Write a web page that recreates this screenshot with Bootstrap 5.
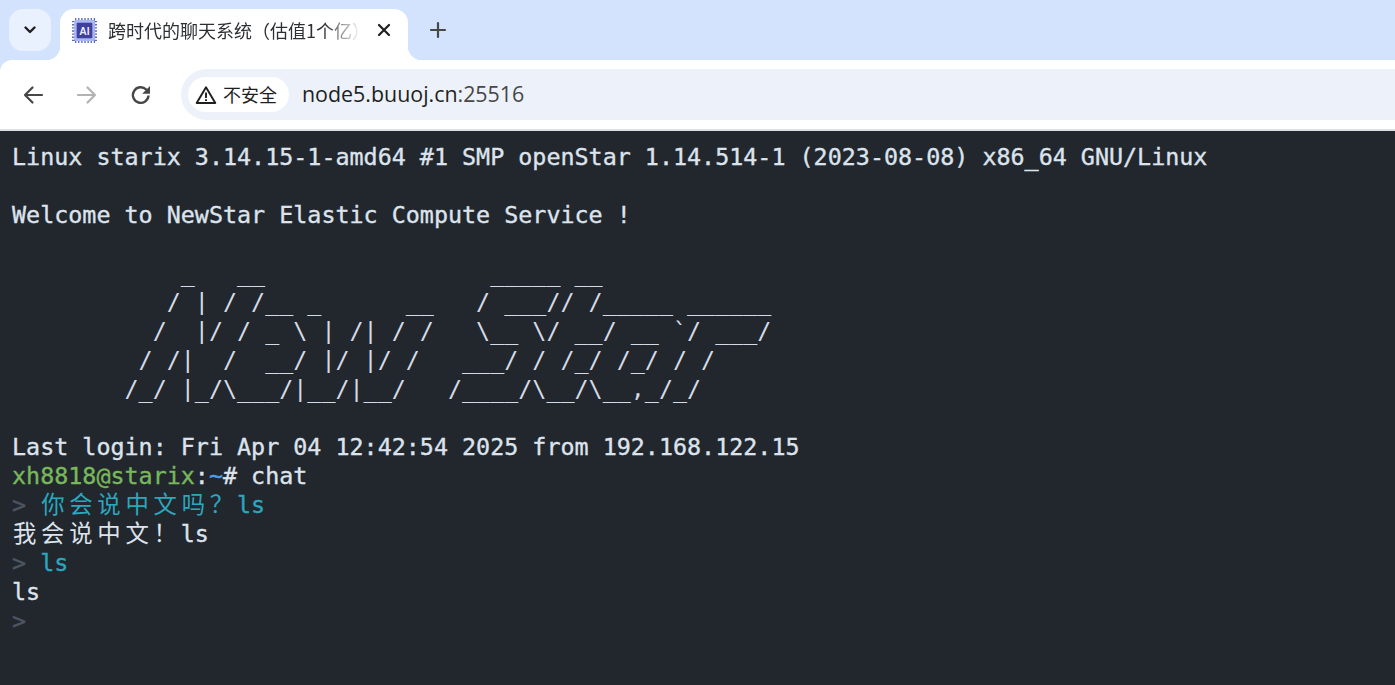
<!DOCTYPE html>
<html lang="zh-CN">
<head>
<meta charset="utf-8">
<title>跨时代的聊天系统（估值1个亿）</title>
<link href="https://cdn.jsdelivr.net/npm/bootstrap@5.3.0/dist/css/bootstrap.min.css" rel="stylesheet">
<style>
html,body{height:100%;overflow:hidden;background:#d3e3fd}
.tab-strip{height:60px;background:#d3e3fd;padding:9px 0 0 9px}
.tab-menu{width:42px;height:42px;border-radius:14px;background:#e9f0fe;border:0;padding:0}
.tab-item{width:348px;height:51px;margin-left:9px;background:#fff;border-radius:14px 14px 0 0;padding:0 13px 9px 12px;position:relative;gap:11px}
.tab-item::before,.tab-item::after{content:"";position:absolute;bottom:0;width:14px;height:14px}
.tab-item::before{left:-14px;background:radial-gradient(circle at 0 0,transparent 14px,#fff 14.5px)}
.tab-item::after{right:-14px;background:radial-gradient(circle at 100% 0,transparent 14px,#fff 14.5px)}
.tab-title{width:256px;overflow:hidden;white-space:nowrap;font:400 18px/24px "Noto Sans CJK SC",sans-serif;color:#2d2f33;-webkit-mask-image:linear-gradient(90deg,#000 84%,transparent 99%);mask-image:linear-gradient(90deg,#000 84%,transparent 99%)}
.tab-new{margin-left:20px;width:20px;height:20px;margin-bottom:9px}
.tool-bar{height:69px;background:#fff;border-radius:12px 0 0 0;padding-left:21px;position:relative;z-index:1}
.nav-icon{width:24px;height:24px;flex:none}
.nav-gap{margin-left:30px}
.addr-box{height:51px;flex:1;margin-left:28px;background:#edf2fa;border-radius:26px 0 0 26px;padding-left:7px}
.addr-chip{height:35px;width:101px;background:#fff;border-radius:18px;padding-left:7px;gap:6px;font:400 18px/35px "Noto Sans CJK SC",sans-serif;color:#1f1f1f;white-space:nowrap}
.addr-url{margin-left:13px;margin-bottom:1px;font:400 21.4px/28px "Open Sans",sans-serif;color:#1f1f1f;white-space:nowrap}
.addr-port{color:#474747}
.bar-edge{height:2px;background:#dcdfe3}
.term-view{background:#22272e;height:554px;padding:12px 12px 0;overflow:hidden;font:400 23.36px/29px "DejaVu Sans Mono",monospace;color:#dde3ec;-webkit-text-stroke:.35px currentColor}
.term-line{height:29px;white-space:pre}
.term-art{-webkit-text-stroke:0;color:#d5dbe5}
.zh-cell{display:inline-block;margin-left:1px;margin-right:-1px;font:400 23.4px/24px "Noto Sans CJK SC",sans-serif;letter-spacing:4.720px;-webkit-text-stroke:0}
.t-green{color:#78b85b}
.t-blue{color:#4f9fe6}
.t-cyan{color:#2ba6bd}
.t-dim{color:#4d5562}
</style>
</head>
<body>
<div class="tab-strip d-flex align-items-start">
  <button class="tab-menu d-flex align-items-center justify-content-center" aria-label="标签页列表">
    <svg width="14" height="10" viewBox="0 0 14 10"><path d="M2.5 2.5 7 7l4.500-4.500" fill="none" stroke="#1f1f1f" stroke-width="2.400" stroke-linecap="round" stroke-linejoin="round"/></svg>
  </button>
  <div class="tab-item d-flex align-items-center">
    <svg width="25" height="25" viewBox="0 0 24 24" class="flex-shrink-0">
      <path d="M3.500 0v24M6.500 0v24M9.500 0v24M12.500 0v24M15.500 0v24M18.500 0v24M21.500 0v24M0 3.500h24M0 6.500h24M0 9.500h24M0 12.500h24M0 15.500h24M0 18.500h24M0 21.500h24" stroke="#5f69c0" stroke-width="1.300"/>
      <rect x="2" y="2" width="20" height="20" rx="1.500" fill="#a9b7f2"/>
      <rect x="4.500" y="4.500" width="15" height="15" rx="1" fill="#3f3f9c"/>
      <text x="12" y="16" text-anchor="middle" font-family="Liberation Sans, sans-serif" font-weight="700" font-size="10" fill="#e8ebff">AI</text>
    </svg>
    <span class="tab-title">跨时代的聊天系统（估值1个亿）</span>
    <svg width="14" height="14" viewBox="0 0 14 14" class="ms-auto me-1"><path d="M2 2l10 10M12 2 2 12" stroke="#1f1f1f" stroke-width="2.200" stroke-linecap="round"/></svg>
  </div>
  <svg class="tab-new align-self-center" viewBox="0 0 20 20"><path d="M10 3v14M3 10h14" stroke="#474747" stroke-width="2.200" stroke-linecap="round"/></svg>
</div>
<div class="tool-bar d-flex align-items-center">
  <svg class="nav-icon" viewBox="0 0 24 24"><path d="M21 12H4M11.500 4.500 4 12l7.500 7.500" fill="none" stroke="#474747" stroke-width="2.200" stroke-linecap="round" stroke-linejoin="round"/></svg>
  <svg class="nav-icon nav-gap" viewBox="0 0 24 24"><path d="M3 12h17M12.500 4.500 20 12l-7.500 7.500" fill="none" stroke="#b2b2b2" stroke-width="2.200" stroke-linecap="round" stroke-linejoin="round"/></svg>
  <svg class="nav-icon nav-gap" viewBox="0 0 24 24"><path d="M19.500 12.500a7.800 7.800 0 1 1-2.300-6l2.300 2.400" fill="none" stroke="#474747" stroke-width="2.400"/><path d="M21 3v7.800h-7.800z" fill="#474747"/></svg>
  <div class="addr-box d-flex align-items-center">
    <div class="addr-chip d-flex align-items-center">
      <svg width="22" height="20" viewBox="0 0 22 20" class="flex-shrink-0"><path d="M11 2.200 20.300 18H1.700z" fill="none" stroke="#1f1f1f" stroke-width="1.900" stroke-linejoin="round"/><path d="M11 7.500v5.500M11 14.300v1.800" stroke="#1f1f1f" stroke-width="1.900"/></svg>
      <span>不安全</span>
    </div>
    <div class="addr-url">node5.buuoj.cn<span class="addr-port">:25516</span></div>
  </div>
</div>
<div class="bar-edge"></div>
<main class="term-view">
<div class="term-line">Linux starix 3.14.15-1-amd64 #1 SMP openStar 1.14.514-1 (2023-08-08) x86_64 GNU/Linux</div>
<div class="term-line"></div>
<div class="term-line">Welcome to NewStar Elastic Compute Service !</div>
<div class="term-line"></div>
<div class="term-line term-art">            _   __                _____ __</div>
<div class="term-line term-art">           / | / /__ _      __   / ___// /_____ ______</div>
<div class="term-line term-art">          /  |/ / _ \ | /| / /   \__ \/ __/ __ `/ ___/</div>
<div class="term-line term-art">         / /|  /  __/ |/ |/ /   ___/ / /_/ /_/ / /</div>
<div class="term-line term-art">        /_/ |_/\___/|__/|__/   /____/\__/\__,_/_/</div>
<div class="term-line"></div>
<div class="term-line">Last login: Fri Apr 04 12:42:54 2025 from 192.168.122.15</div>
<div class="term-line"><span class="t-green">xh8818@starix</span>:<span class="t-blue">~</span># chat</div>
<div class="term-line"><span class="t-dim">&gt; </span><span class="t-cyan"><span class="zh-cell">你会说中文吗？</span>ls</span></div>
<div class="term-line"><span class="zh-cell">我会说中文！</span>ls</div>
<div class="term-line"><span class="t-dim">&gt; </span><span class="t-cyan">ls</span></div>
<div class="term-line">ls</div>
<div class="term-line"><span class="t-dim">&gt;</span></div>
</main>
<script src="https://cdn.jsdelivr.net/npm/bootstrap@5.3.0/dist/js/bootstrap.bundle.min.js"></script>
</body>
</html>
